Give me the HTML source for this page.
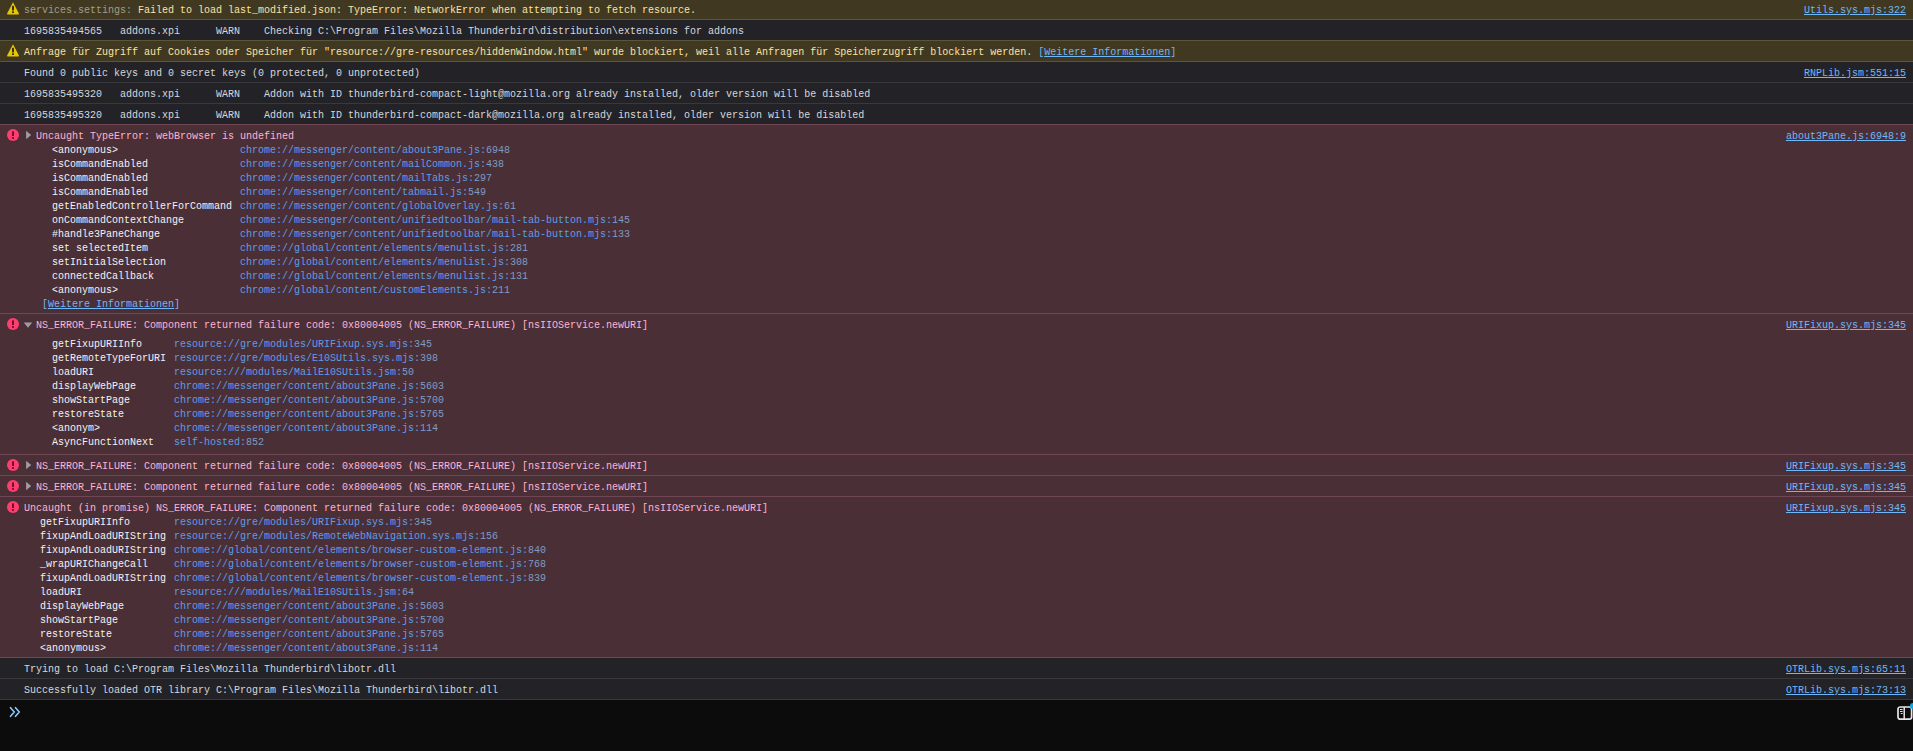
<!DOCTYPE html>
<html lang="de"><head><meta charset="utf-8"><title>Browser Console</title>
<style>
*{margin:0;padding:0;box-sizing:border-box}
html,body{width:1913px;height:751px;overflow:hidden;background:#232327}
body{position:relative;font-family:"Liberation Mono","DejaVu Sans Mono",monospace;font-size:10px;line-height:14px;color:#d7d7db;-webkit-font-smoothing:antialiased}
.row{position:absolute;left:0;width:1913px;box-sizing:content-box;border-top:1px solid #38383d;border-bottom:1px solid #38383d;margin-top:-1px}
.row.log{background:#232327}
.row.warn{background:#413822;border-color:#5a563a;color:#fce2a1;z-index:1}
.row.error{background:#4b2f36;border-color:#704655;color:#ffb3d2;z-index:2}
.ln{position:absolute;margin-top:2px;height:14px;white-space:pre;tab-size:8;-moz-tab-size:8}
.ic{position:absolute;left:7px;top:4px}
.wi{top:3.4px}
.tw{position:absolute;left:25px;top:5px}
.pfx{color:#a39c86}
.loc{position:absolute;right:7px;top:5px;height:14px;color:#70b7f7;text-decoration:underline;white-space:pre}
.lm{color:#70b7f7}
.lm u{text-decoration:underline}
.fn{color:#f2f2f4}
.src{color:#5c9ee6}
.lno{color:#7d9cc4}
.input{position:absolute;left:0;top:700px;width:1913px;height:51px;background:#0c0c0d}
.prompt{position:absolute;left:9px;top:6px}
.sb{position:absolute;left:1896px;top:5px}
.dot{position:absolute;left:1909.5px;top:2.5px;width:6px;height:6px;border-radius:3px;background:#0ba4f0}
</style></head>
<body>
<div class="row warn" style="top:-1px;height:20px"><svg class="ic wi" viewBox="0 0 12 12.6" width="12" height="12.6"><path d="M6 0.2 L11.9 11.4 Q12.1 12.4 11.2 12.4 L0.8 12.4 Q-0.1 12.4 0.1 11.4 Z" fill="#e6c800"/><rect x="5" y="3.8" width="2" height="4.6" rx="0.5" fill="#3c2d0c"/><rect x="5" y="9.2" width="2" height="1.9" rx="0.5" fill="#3c2d0c"/></svg><div class="ln" style="left:24px;top:3px"><span class="pfx">services.settings: </span>Failed to load last_modified.json: TypeError: NetworkError when attempting to fetch resource.</div><a class="loc">Utils.sys.mjs:322</a></div>
<div class="row log" style="top:20px;height:20px"><div class="ln" style="left:24px;top:3px">1695835494565   addons.xpi      WARN    Checking C:\Program Files\Mozilla Thunderbird\distribution\extensions for addons</div></div>
<div class="row warn" style="top:41px;height:20px"><svg class="ic wi" viewBox="0 0 12 12.6" width="12" height="12.6"><path d="M6 0.2 L11.9 11.4 Q12.1 12.4 11.2 12.4 L0.8 12.4 Q-0.1 12.4 0.1 11.4 Z" fill="#e6c800"/><rect x="5" y="3.8" width="2" height="4.6" rx="0.5" fill="#3c2d0c"/><rect x="5" y="9.2" width="2" height="1.9" rx="0.5" fill="#3c2d0c"/></svg><div class="ln" style="left:24px;top:3px">Anfrage für Zugriff auf Cookies oder Speicher für "resource://gre-resources/hiddenWindow.html" wurde blockiert, weil alle Anfragen für Speicherzugriff blockiert werden. <span class="lm">[<u>Weitere Informationen</u>]</span></div></div>
<div class="row log" style="top:62px;height:20px"><div class="ln" style="left:24px;top:3px">Found 0 public keys and 0 secret keys (0 protected, 0 unprotected)</div><a class="loc">RNPLib.jsm:551:15</a></div>
<div class="row log" style="top:83px;height:20px"><div class="ln" style="left:24px;top:3px">1695835495320   addons.xpi      WARN    Addon with ID thunderbird-compact-light@mozilla.org already installed, older version will be disabled</div></div>
<div class="row log" style="top:104px;height:20px"><div class="ln" style="left:24px;top:3px">1695835495320   addons.xpi      WARN    Addon with ID thunderbird-compact-dark@mozilla.org already installed, older version will be disabled</div></div>
<div class="row error" style="top:125px;height:188px"><svg class="ic" viewBox="0 0 12 12" width="12" height="12"><circle cx="6" cy="6" r="6" fill="#ff3d6e"/><rect x="5" y="2.3" width="2" height="4.8" rx="0.6" fill="#7a0d2e"/><rect x="5" y="8" width="2" height="1.9" rx="0.6" fill="#7a0d2e"/></svg><svg class="tw" viewBox="0 0 8 10" width="8" height="10"><path d="M1.1 0.8 L6.2 5 L1.1 9.2 Z" fill="#a19ba0"/></svg><div class="ln" style="left:36px;top:3px">Uncaught TypeError: webBrowser is undefined</div><a class="loc">about3Pane.js:6948:9</a>
<div class="ln fn" style="left:52px;top:17px">&lt;anonymous&gt;</div><div class="ln src" style="left:240px;top:17px">chrome://messenger/content/about3Pane.js<span class="lno">:6948</span></div>
<div class="ln fn" style="left:52px;top:31px">isCommandEnabled</div><div class="ln src" style="left:240px;top:31px">chrome://messenger/content/mailCommon.js<span class="lno">:438</span></div>
<div class="ln fn" style="left:52px;top:45px">isCommandEnabled</div><div class="ln src" style="left:240px;top:45px">chrome://messenger/content/mailTabs.js<span class="lno">:297</span></div>
<div class="ln fn" style="left:52px;top:59px">isCommandEnabled</div><div class="ln src" style="left:240px;top:59px">chrome://messenger/content/tabmail.js<span class="lno">:549</span></div>
<div class="ln fn" style="left:52px;top:73px">getEnabledControllerForCommand</div><div class="ln src" style="left:240px;top:73px">chrome://messenger/content/globalOverlay.js<span class="lno">:61</span></div>
<div class="ln fn" style="left:52px;top:87px">onCommandContextChange</div><div class="ln src" style="left:240px;top:87px">chrome://messenger/content/unifiedtoolbar/mail-tab-button.mjs<span class="lno">:145</span></div>
<div class="ln fn" style="left:52px;top:101px">#handle3PaneChange</div><div class="ln src" style="left:240px;top:101px">chrome://messenger/content/unifiedtoolbar/mail-tab-button.mjs<span class="lno">:133</span></div>
<div class="ln fn" style="left:52px;top:115px">set selectedItem</div><div class="ln src" style="left:240px;top:115px">chrome://global/content/elements/menulist.js<span class="lno">:281</span></div>
<div class="ln fn" style="left:52px;top:129px">setInitialSelection</div><div class="ln src" style="left:240px;top:129px">chrome://global/content/elements/menulist.js<span class="lno">:308</span></div>
<div class="ln fn" style="left:52px;top:143px">connectedCallback</div><div class="ln src" style="left:240px;top:143px">chrome://global/content/elements/menulist.js<span class="lno">:131</span></div>
<div class="ln fn" style="left:52px;top:157px">&lt;anonymous&gt;</div><div class="ln src" style="left:240px;top:157px">chrome://global/content/customElements.js<span class="lno">:211</span></div>
<div class="ln lm" style="left:42px;top:171px">[<u>Weitere Informationen</u>]</div></div>
<div class="row error" style="top:314px;height:140px"><svg class="ic" viewBox="0 0 12 12" width="12" height="12"><circle cx="6" cy="6" r="6" fill="#ff3d6e"/><rect x="5" y="2.3" width="2" height="4.8" rx="0.6" fill="#7a0d2e"/><rect x="5" y="8" width="2" height="1.9" rx="0.6" fill="#7a0d2e"/></svg><svg class="tw" viewBox="0 0 10 8" width="10" height="8" style="left:23px;top:7px"><path d="M0.8 1.4 L9.2 1.4 L5 6.8 Z" fill="#a19ba0"/></svg><div class="ln" style="left:36px;top:3px">NS_ERROR_FAILURE: Component returned failure code: 0x80004005 (NS_ERROR_FAILURE) [nsIIOService.newURI]</div><a class="loc">URIFixup.sys.mjs:345</a>
<div class="ln fn" style="left:52px;top:22px">getFixupURIInfo</div><div class="ln src" style="left:174px;top:22px">resource://gre/modules/URIFixup.sys.mjs<span class="lno">:345</span></div>
<div class="ln fn" style="left:52px;top:36px">getRemoteTypeForURI</div><div class="ln src" style="left:174px;top:36px">resource://gre/modules/E10SUtils.sys.mjs<span class="lno">:398</span></div>
<div class="ln fn" style="left:52px;top:50px">loadURI</div><div class="ln src" style="left:174px;top:50px">resource:///modules/MailE10SUtils.jsm<span class="lno">:50</span></div>
<div class="ln fn" style="left:52px;top:64px">displayWebPage</div><div class="ln src" style="left:174px;top:64px">chrome://messenger/content/about3Pane.js<span class="lno">:5603</span></div>
<div class="ln fn" style="left:52px;top:78px">showStartPage</div><div class="ln src" style="left:174px;top:78px">chrome://messenger/content/about3Pane.js<span class="lno">:5700</span></div>
<div class="ln fn" style="left:52px;top:92px">restoreState</div><div class="ln src" style="left:174px;top:92px">chrome://messenger/content/about3Pane.js<span class="lno">:5765</span></div>
<div class="ln fn" style="left:52px;top:106px">&lt;anonym&gt;</div><div class="ln src" style="left:174px;top:106px">chrome://messenger/content/about3Pane.js<span class="lno">:114</span></div>
<div class="ln fn" style="left:52px;top:120px">AsyncFunctionNext</div><div class="ln src" style="left:174px;top:120px">self-hosted<span class="lno">:852</span></div>
</div>
<div class="row error" style="top:455px;height:20px"><svg class="ic" viewBox="0 0 12 12" width="12" height="12"><circle cx="6" cy="6" r="6" fill="#ff3d6e"/><rect x="5" y="2.3" width="2" height="4.8" rx="0.6" fill="#7a0d2e"/><rect x="5" y="8" width="2" height="1.9" rx="0.6" fill="#7a0d2e"/></svg><svg class="tw" viewBox="0 0 8 10" width="8" height="10"><path d="M1.1 0.8 L6.2 5 L1.1 9.2 Z" fill="#a19ba0"/></svg><div class="ln" style="left:36px;top:3px">NS_ERROR_FAILURE: Component returned failure code: 0x80004005 (NS_ERROR_FAILURE) [nsIIOService.newURI]</div><a class="loc">URIFixup.sys.mjs:345</a></div>
<div class="row error" style="top:476px;height:20px"><svg class="ic" viewBox="0 0 12 12" width="12" height="12"><circle cx="6" cy="6" r="6" fill="#ff3d6e"/><rect x="5" y="2.3" width="2" height="4.8" rx="0.6" fill="#7a0d2e"/><rect x="5" y="8" width="2" height="1.9" rx="0.6" fill="#7a0d2e"/></svg><svg class="tw" viewBox="0 0 8 10" width="8" height="10"><path d="M1.1 0.8 L6.2 5 L1.1 9.2 Z" fill="#a19ba0"/></svg><div class="ln" style="left:36px;top:3px">NS_ERROR_FAILURE: Component returned failure code: 0x80004005 (NS_ERROR_FAILURE) [nsIIOService.newURI]</div><a class="loc">URIFixup.sys.mjs:345</a></div>
<div class="row error" style="top:497px;height:160px"><svg class="ic" viewBox="0 0 12 12" width="12" height="12"><circle cx="6" cy="6" r="6" fill="#ff3d6e"/><rect x="5" y="2.3" width="2" height="4.8" rx="0.6" fill="#7a0d2e"/><rect x="5" y="8" width="2" height="1.9" rx="0.6" fill="#7a0d2e"/></svg><div class="ln" style="left:24px;top:3px">Uncaught (in promise) NS_ERROR_FAILURE: Component returned failure code: 0x80004005 (NS_ERROR_FAILURE) [nsIIOService.newURI]</div><a class="loc">URIFixup.sys.mjs:345</a>
<div class="ln fn" style="left:40px;top:17px">getFixupURIInfo</div><div class="ln src" style="left:174px;top:17px">resource://gre/modules/URIFixup.sys.mjs<span class="lno">:345</span></div>
<div class="ln fn" style="left:40px;top:31px">fixupAndLoadURIString</div><div class="ln src" style="left:174px;top:31px">resource://gre/modules/RemoteWebNavigation.sys.mjs<span class="lno">:156</span></div>
<div class="ln fn" style="left:40px;top:45px">fixupAndLoadURIString</div><div class="ln src" style="left:174px;top:45px">chrome://global/content/elements/browser-custom-element.js<span class="lno">:840</span></div>
<div class="ln fn" style="left:40px;top:59px">_wrapURIChangeCall</div><div class="ln src" style="left:174px;top:59px">chrome://global/content/elements/browser-custom-element.js<span class="lno">:768</span></div>
<div class="ln fn" style="left:40px;top:73px">fixupAndLoadURIString</div><div class="ln src" style="left:174px;top:73px">chrome://global/content/elements/browser-custom-element.js<span class="lno">:839</span></div>
<div class="ln fn" style="left:40px;top:87px">loadURI</div><div class="ln src" style="left:174px;top:87px">resource:///modules/MailE10SUtils.jsm<span class="lno">:64</span></div>
<div class="ln fn" style="left:40px;top:101px">displayWebPage</div><div class="ln src" style="left:174px;top:101px">chrome://messenger/content/about3Pane.js<span class="lno">:5603</span></div>
<div class="ln fn" style="left:40px;top:115px">showStartPage</div><div class="ln src" style="left:174px;top:115px">chrome://messenger/content/about3Pane.js<span class="lno">:5700</span></div>
<div class="ln fn" style="left:40px;top:129px">restoreState</div><div class="ln src" style="left:174px;top:129px">chrome://messenger/content/about3Pane.js<span class="lno">:5765</span></div>
<div class="ln fn" style="left:40px;top:143px">&lt;anonymous&gt;</div><div class="ln src" style="left:174px;top:143px">chrome://messenger/content/about3Pane.js<span class="lno">:114</span></div>
</div>
<div class="row log" style="top:658px;height:20px"><div class="ln" style="left:24px;top:3px">Trying to load C:\Program Files\Mozilla Thunderbird\libotr.dll</div><a class="loc">OTRLib.sys.mjs:65:11</a></div>
<div class="row log" style="top:679px;height:20px"><div class="ln" style="left:24px;top:3px">Successfully loaded OTR library C:\Program Files\Mozilla Thunderbird\libotr.dll</div><a class="loc">OTRLib.sys.mjs:73:13</a></div>
<div class="input">
<svg class="prompt" viewBox="0 0 12 12" width="12" height="12"><path d="M1.5 1.7 L5.3 6 L1.5 10.3 M6.5 1.7 L10.3 6 L6.5 10.3" fill="none" stroke="#8ccaff" stroke-width="1.6" stroke-linecap="round" stroke-linejoin="round"/></svg>
<svg class="sb" viewBox="0 0 17 16" width="17" height="16"><rect x="2" y="2" width="13.6" height="12.2" rx="2.2" fill="none" stroke="#e6e6e8" stroke-width="1.7"/><path d="M8.2 2 V14" stroke="#e6e6e8" stroke-width="1.5"/><path d="M4 4.5 H6.6 M4 6.5 H6.6 M4.8 8.5 H6.6" stroke="#e6e6e8" stroke-width="1"/></svg>
<div class="dot"></div>
</div>
</body></html>
